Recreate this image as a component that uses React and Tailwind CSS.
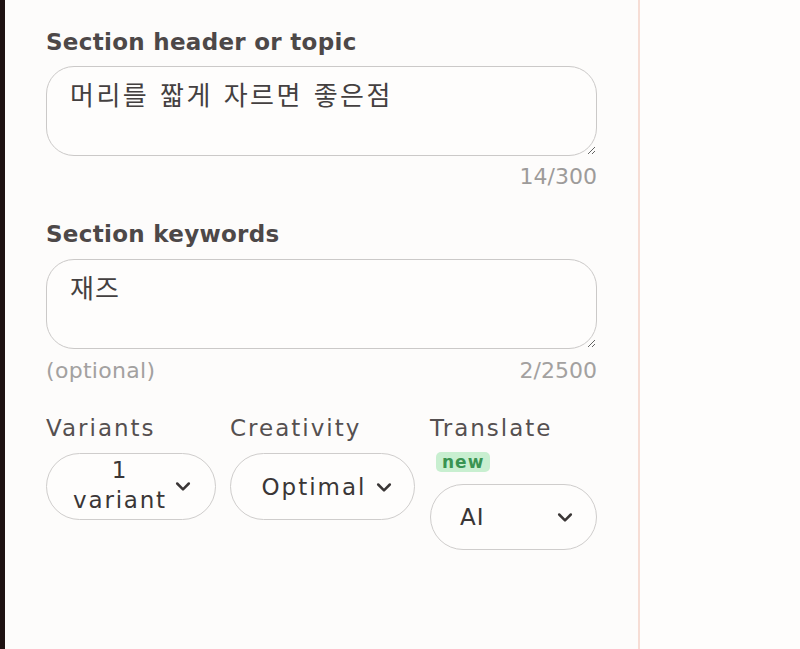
import React from "react";

function Chevron({ className = "" }) {
  return (
    <svg viewBox="0 0 24 24" className={className} fill="none" stroke="currentColor" strokeWidth="3" strokeLinecap="round" strokeLinejoin="round">
      <path d="M5 9l7 7 7-7" />
    </svg>
  );
}

const KR = { fontFamily: "'DejaVu Sans', 'Noto Sans CJK KR', sans-serif" };

export default function App() {
  return (
    <div className="flex h-[649px] w-[800px] overflow-hidden bg-[#fdfcfb]" style={{ fontFamily: "'DejaVu Sans', 'Noto Sans CJK KR', sans-serif" }}>
      <div className="w-[5px] shrink-0 bg-[#1e1212]" />
      <div className="w-[635px] shrink-0 border-r-2 border-[#f6ddd5] px-[41px] pt-[27px]">
        <div className="text-[23px] leading-[30px] font-bold tracking-[0.3px] text-[#4d4848]">Section header or topic</div>
        <textarea
          defaultValue="머리를 짧게 자르면 좋은점"
          className="mt-[9px] block h-[90px] w-full rounded-[28px] border border-[#cbc9c8] bg-[#fefdfc] px-[23px] py-[12px] text-[26px] leading-[34px] tracking-[2.5px] text-[#444040] outline-none"
          style={KR}
        />
        <div className="mt-[9px] text-right text-[22px] leading-[24px] text-[#9d9b9a]">14/300</div>
        <div className="mt-[30px] text-[23px] leading-[30px] font-bold tracking-[0.3px] text-[#4d4848]">Section keywords</div>
        <textarea
          defaultValue="재즈"
          className="mt-[10px] block h-[90px] w-full rounded-[28px] border border-[#cbc9c8] bg-[#fefdfc] px-[23px] py-[12px] text-[26px] leading-[34px] tracking-[1px] text-[#444040] outline-none"
          style={KR}
        />
        <div className="mt-[10px] flex justify-between text-[22px] leading-[24px] text-[#a3a1a0]">
          <span className="tracking-[0.3px]">(optional)</span>
          <span>2/2500</span>
        </div>
        <div className="mt-[30px] flex gap-[14px]">
          <div className="w-[170px] shrink-0">
            <div className="text-[23px] leading-[30px] tracking-[2px] text-[#555050]">Variants</div>
            <div className="mt-[10px] flex h-[67px] items-center rounded-full border border-[#cfcdcc] bg-[#fefdfc] pl-[22px] pr-[22px]">
              <div className="mb-[4px] flex-1 text-center text-[23px] leading-[30px] tracking-[1.8px] text-[#3a3636]">1<br />variant</div>
              <Chevron className="ml-[2px] mb-[2px] h-[20px] w-[20px] text-[#3a3636]" />
            </div>
          </div>
          <div className="w-[185px] shrink-0">
            <div className="text-[23px] leading-[30px] tracking-[2px] text-[#555050]">Creativity</div>
            <div className="mt-[10px] flex h-[67px] items-center justify-center gap-[7px] rounded-full border border-[#cfcdcc] bg-[#fefdfc] pl-[10px]">
              <span className="text-[23px] leading-[30px] tracking-[2px] text-[#3a3636]">Optimal</span>
              <Chevron className="h-[20px] w-[20px] text-[#3a3636]" />
            </div>
          </div>
          <div className="ml-[1px] w-[167px] shrink-0">
            <div className="text-[23px] leading-[30px] tracking-[2px] text-[#555050]">Translate</div>
            <div className="mt-[9px] ml-[6px] inline-block rounded-[5px] bg-[#c8efd0] px-[6px] text-[17px] leading-[20px] font-bold tracking-[1px] text-[#3a9452]">new</div>
            <div className="mt-[9px] flex h-[66px] items-center justify-between rounded-full border border-[#cfcdcc] bg-[#fefdfc] pl-[29px] pr-[21px]">
              <span className="text-[23px] leading-[30px] tracking-[1px] text-[#3a3636]">AI</span>
              <Chevron className="h-[20px] w-[20px] text-[#3a3636]" />
            </div>
          </div>
        </div>
      </div>
      <div className="flex-1 bg-[#fefdfc]" />
    </div>
  );
}
